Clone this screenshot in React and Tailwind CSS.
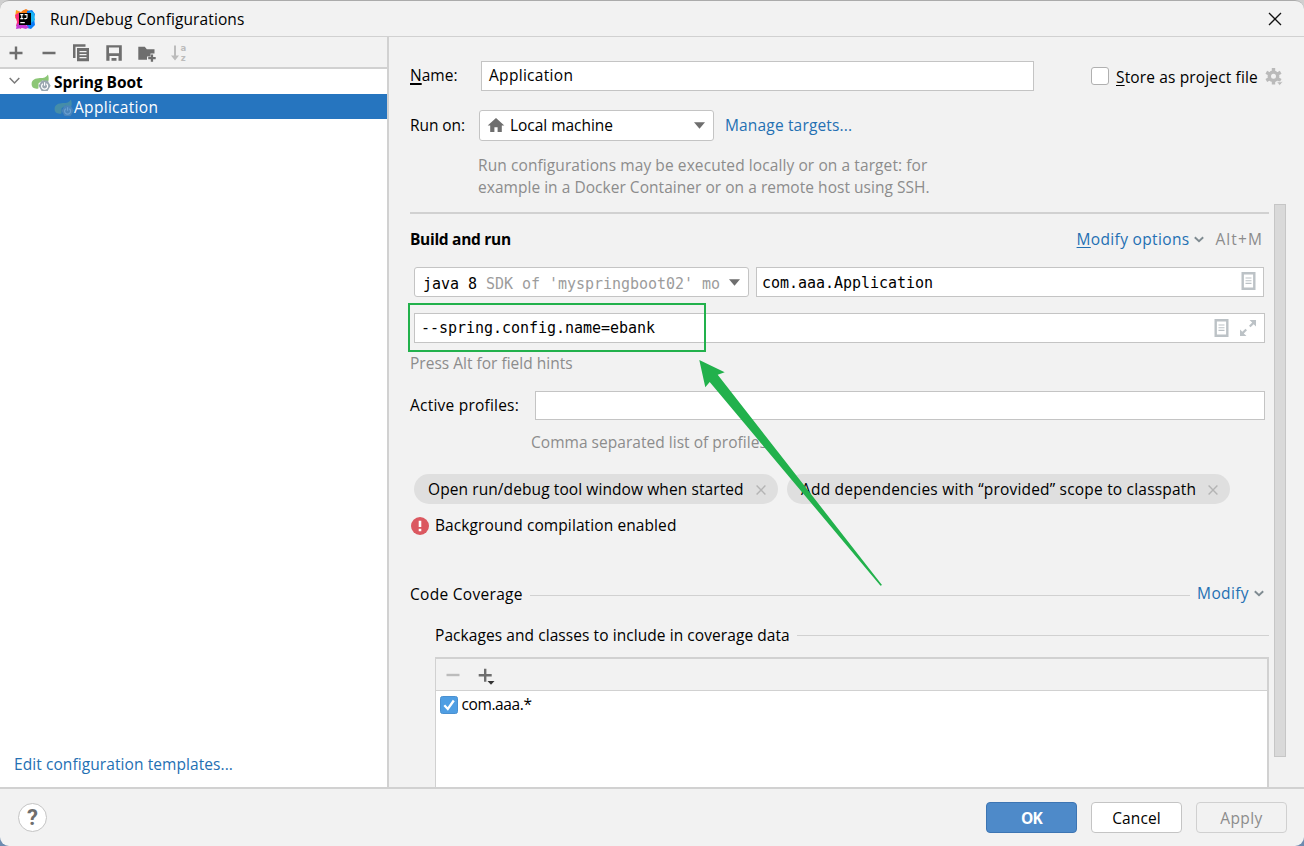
import React, { useState } from 'react';

// =============================================================================
// ICONS
// =============================================================================

const IdeaLogo = () => (
  <svg width="20" height="20" viewBox="0 0 20 20">
    <path d="M1 1l5 2 3-2 2 4-6 8-5-4z" fill="#fe9a1c" />
    <path d="M7 2l4-2 5 3-6 5H5z" fill="#f97a12" />
    <path d="M0 6l5-3 3 8-2 9-5-3 1-4z" fill="#fe2d7d" />
    <path d="M12 2l5-1 3 4-1 4 1 7-4 4-4-1z" fill="#0a7cf6" />
    <path d="M2 15l6-1 6 4-3 2-4-1-6 1z" fill="#c53bd6" />
    <path d="M15 2l4 2 1 7-4 3z" fill="#18b4f3" />
    <path d="M4 4h12v12H4z" />
    <path
      d="M5.3 5.6h3M6.8 5.6v4M5.3 9.6h3M9.600 5.6h2.400v2.8q0 1.2-1.2 1.2H9.300"
      fill="none"
      stroke="#fff"
      strokeWidth="1.1"
    />
    <path d="M5.3 13.1h4.5v1.1H5.3z" fill="#fff" />
  </svg>
);

const SpringIcon = ({ className }) => (
  <svg width="20" height="18" viewBox="0 0 20 18" className={className}>
    <path
      d="M17 .5c1 3.300 1 6.300-.3 8L11.500 6.500 7.600 9.200 7.400 14.500C3 15.300.6 13.300.6 10.300.6 5.500 4.500 4.300 9 4.100c3.600-.1 6.200-.6 8-3.600z"
      fill="#8cc676"
    />
    <path d="M10.600 6.600h6l3 5.200-3 5.200h-6l-3-5.200z" fill="#9aa7b0" />
    <path d="M11.900 9.700a3 3 0 1 0 3.400 0M13.600 8.300v3.400" fill="none" stroke="#fff" strokeWidth="1.200" />
  </svg>
);

const PlusIcon = () => (
  <svg width="20" height="20" viewBox="0 0 20 20" fill="#6e6e6e">
    <path d="M8.800 3.500h2.400v5.300h5.300v2.400h-5.300v5.300H8.800v-5.300H3.500V8.800h5.300z" />
  </svg>
);

const MinusIcon = ({ fill = '#6e6e6e' }) => (
  <svg width="20" height="20" viewBox="0 0 20 20" fill={fill}>
    <path d="M3.500 8.800h13v2.400h-13z" />
  </svg>
);

const CopyIcon = () => (
  <svg width="20" height="20" viewBox="0 0 20 20" fill="#6e6e6e">
    <path d="M2 1.300h12.500v2.500H4.500V15H2z" />
    <path fillRule="evenodd" d="M6 5h12v13.300H6zM8.500 8v1.300h7V8zM8.500 11v1.300h7V11zM8.500 14v1.300h7V14z" />
  </svg>
);

const SaveIcon = () => (
  <svg width="20" height="20" viewBox="0 0 20 20" fill="#6e6e6e">
    <path fillRule="evenodd" d="M2.300 2.300h15.500v15.500H2.300zM5 4.600v5.700h10V4.600zM5.500 13v4.800h2V15h5v2.800h2V13z" />
  </svg>
);

const NewFolderIcon = () => (
  <svg width="20" height="20" viewBox="0 0 20 20" fill="#6e6e6e">
    <path d="M1.300 3.700h6.500l2 2.600h7.700v4.200h-4v3H10v3.200H1.300z" />
    <path d="M13.800 11.500h2.300v2.400h2.600v2.300h-2.600v2.500h-2.300v-2.500h-2.600v-2.300h2.600z" />
  </svg>
);

const SortIcon = () => (
  <svg width="20" height="20" viewBox="0 0 20 20" fill="#bcbcbc">
    <path d="M5 2.500h2v10h3l-4 5-4-5h3z" />
    <text x="11.500" y="7.800" fontSize="8.500" fontWeight="700" fontFamily="DejaVu Sans, sans-serif">a</text>
    <text x="11.700" y="18" fontSize="8.500" fontWeight="700" fontFamily="DejaVu Sans, sans-serif">z</text>
  </svg>
);

const HomeIcon = () => (
  <svg width="18" height="16" viewBox="0 0 18 16" fill="#6e6e6e">
    <path d="M9 0L17.300 7.400h-2.500v6.700h-4.200V9.200H7.400v4.900H3.200V7.400H.7z" />
  </svg>
);

const ChevronIcon = ({ stroke = '#7f8b91' }) => (
  <svg width="10" height="8" viewBox="0 0 10 8" fill="none" stroke={stroke} strokeWidth="1.900">
    <path d="M.8 1.300L5 5.300l4.200-4" />
  </svg>
);

const TreeArrowIcon = () => (
  <svg width="12" height="8" viewBox="0 0 12 8" fill="none" stroke="#7a7a7a" strokeWidth="1.500">
    <path d="M.7 1L5.500 6l4.800-5" />
  </svg>
);

const TriangleIcon = () => (
  <svg width="11" height="7" viewBox="0 0 11 7" fill="#6e6e6e">
    <path d="M0 .3h11L5.500 6.800z" />
  </svg>
);

const GearIcon = () => (
  <svg width="19" height="19" viewBox="0 0 19 19">
    <circle cx="8.500" cy="8.300" r="4.200" fill="none" stroke="#bababa" strokeWidth="3.400" />
    <path
      d="M8.500 0v4M8.500 12.600v4M1.300 4.200l3.500 2M12.200 10.400l3.500 2M1.300 12.400l3.500-2M12.200 6.200l3.500-2"
      stroke="#bababa"
      strokeWidth="3.400"
    />
    <path d="M11.500 13.800h6.500l-3.300 3.800z" fill="#bababa" stroke="#f2f2f2" strokeWidth=".8" />
  </svg>
);

const MacroIcon = () => (
  <svg width="15" height="18" viewBox="0 0 15 18" fill="none" stroke="#bcc2c6">
    <path d="M1.700 1.300h11.600v15.400H1.700z" strokeWidth="2.400" />
    <path d="M4.500 6h6M4.500 8.700h6M4.500 11.400h6" strokeWidth="1.100" />
  </svg>
);

const ExpandIcon = () => (
  <svg width="16" height="16" viewBox="0 0 16 16" fill="#bcc2c6">
    <path d="M9.500 0H16v6.500L13.700 4.200 10.500 7.300 9 5.800l3.200-3.400z" />
    <path d="M6.500 16H0V9.500l2.300 2.300 3.200-3.100L7 10.200l-3.200 3.400z" />
  </svg>
);

const ChipCloseIcon = () => (
  <svg width="10" height="10" viewBox="0 0 10 10" stroke="#b4b4b4" strokeWidth="1.400">
    <path d="M.6.6l8.800 8.800M9.400.6L.6 9.400" />
  </svg>
);

const ErrorIcon = () => (
  <svg width="18" height="18" viewBox="0 0 18 18">
    <circle cx="9" cy="9" r="9" fill="#db5860" />
    <path d="M7.700 3.800h2.600v6.100H7.700zM7.700 11.700h2.600v2.500H7.700z" fill="#fff" />
  </svg>
);

const AddMenuIcon = () => (
  <svg width="20" height="20" viewBox="0 0 20 20">
    <path d="M8 2.800h2.400v5.300h5.300v2.400h-5.300v5.300H8v-5.300H2.700V8.100H8z" fill="#6e6e6e" />
    <path d="M11.500 15h7L15 18.700z" fill="#333" />
  </svg>
);

// =============================================================================
// COMPONENTS
// =============================================================================

const TitleBar = () => (
  <header className="flex h-[36px] shrink-0 items-center border-b border-[#d1d1d1] pl-[15px]">
    <IdeaLogo />
    <span className="ml-[15px] pt-[2px] tracking-[0.108px]">Run/Debug Configurations</span>
    <svg width="14" height="14" viewBox="0 0 14 14" stroke="#111" strokeWidth="1.300" className="mr-[22px] ml-auto">
      <path d="M1 1l12 12M13 1L1 13" />
    </svg>
  </header>
);

const Sidebar = () => (
  <aside className="flex w-[389px] shrink-0 flex-col border-r-2 border-[#d1d1d1] bg-white">
    <div className="flex h-[32px] items-center gap-[12.700px] border-b-2 border-[#d1d1d1] bg-[#f2f2f2] pt-px pl-[6px]">
      <PlusIcon />
      <MinusIcon />
      <CopyIcon />
      <SaveIcon />
      <NewFolderIcon />
      <SortIcon />
    </div>

    <div className="flex h-[25px] items-center pl-[9px]">
      <span className="mb-[2px]"><TreeArrowIcon /></span>
      <SpringIcon className="mt-[2px] ml-[10px]" />
      <span className="ml-[3px] pt-[2px] font-bold tracking-[-0.070px]">Spring Boot</span>
    </div>
    <div className="flex h-[25px] items-center bg-[#2675bf] pl-[54px] text-white">
      <SpringIcon className="mt-[2px] opacity-30" />
      <span className="pt-[3px] tracking-[0.300px]">Application</span>
    </div>

    <a className="mt-auto mb-[12px] ml-[14px] leading-[22px] tracking-[0.080px] text-[#2470b3]">
      Edit configuration templates...
    </a>
  </aside>
);

const RunTarget = ({ stored, onStoredChange }) => (
  <div className="h-[167px] pt-[24px]">
    <div className="flex h-[30px] items-center">
      <label className="w-[71px] tracking-[0.020px]">
        <span className="underline decoration-[1.500px] underline-offset-2">N</span>ame:
      </label>
      <div className="flex h-[30px] w-[553px] items-center border border-[#c4c4c4] bg-white pl-[7px] tracking-[0.300px]">
        Application
      </div>
      <button
        className="ml-[57px] h-[18px] w-[18px] rounded-[3px] border border-[#b0b0b0] bg-white"
        onClick={() => onStoredChange(!stored)}
      />
      <span className="ml-[7px] pt-[4px] tracking-[0.140px]">
        <span className="underline underline-offset-2">S</span>tore as project file
      </span>
      <span className="ml-[7px] pt-[2px]"><GearIcon /></span>
    </div>

    <div className="mt-[19px] flex h-[31px] items-center">
      <label className="w-[69px] tracking-[-0.080px]">Run on:</label>
      <div className="flex h-[31px] w-[235px] items-center rounded-[3px] border border-[#c4c4c4] bg-white pr-[8px] pl-[7px]">
        <HomeIcon />
        <span className="mr-auto ml-[5px] tracking-[-0.040px]">Local machine</span>
        <TriangleIcon />
      </div>
      <a className="ml-[11px] tracking-[0.160px] text-[#2470b3]">Manage targets...</a>
    </div>

    <div className="mt-[13px] ml-[68px] leading-[22px] whitespace-nowrap text-[#8c8c8c]">
      <div className="tracking-[0.090px]">Run configurations may be executed locally or on a target: for</div>
      <div className="tracking-[0.034px]">example in a Docker Container or on a remote host using SSH.</div>
    </div>
  </div>
);

const BuildAndRun = () => (
  <>
    <div className="mt-[10px] flex h-[30px] items-center">
      <span className="pt-[2px] font-bold tracking-[-0.300px]">Build and run</span>
      <a className="ml-auto pt-[2px] tracking-[0.340px] text-[#2470b3]">
        <span className="underline underline-offset-2">M</span>odify options
      </a>
      <span className="mt-[2px] ml-[5px]"><ChevronIcon /></span>
      <span className="mr-[6px] ml-[11px] pt-[2px] tracking-[1.100px] text-[#8c8c8c]">Alt+M</span>
    </div>

    <div className="mt-[13px] ml-[4px] flex h-[30px] font-['DejaVu_Sans_Mono',monospace] text-[15px] tracking-[-0.030px]">
      <div className="flex w-[335px] items-center rounded-[3px] border border-[#c4c4c4] bg-white pr-[8px] pl-[8px]">
        <span className="mr-auto pt-[4px] whitespace-pre">
          java 8 <span className="text-[#9c9c9c]">SDK of 'myspringboot02' mo</span>
        </span>
        <TriangleIcon />
      </div>
      <div className="ml-[7px] flex w-[508px] items-center justify-between border border-[#c4c4c4] bg-white pr-[7px] pl-[5px]">
        <span className="pt-[2px]">com.aaa.Application</span>
        <span className="mb-[2px]"><MacroIcon /></span>
      </div>
    </div>

    {/* Program arguments */}
    <div className="relative mt-[16px] ml-[4px] flex h-[30px] w-[851px] items-center border border-[#c4c4c4] bg-white pr-[8px] pl-[6px] font-['DejaVu_Sans_Mono',monospace] text-[15px] tracking-[-0.030px]">
      <span className="mr-auto">--spring.config.name=ebank</span>
      <MacroIcon />
      <span className="ml-[11px]"><ExpandIcon /></span>
      <div className="pointer-events-none absolute -top-[11px] -left-[7px] h-[49px] w-[298px] border-2 border-[#22b14c]" />
    </div>
    <div className="mt-[9px] leading-[22px] tracking-[0.010px] text-[#8c8c8c]">Press Alt for field hints</div>

    <div className="mt-[17px] flex h-[29px] items-center">
      <label className="w-[125px] tracking-[0.220px]">Active profiles:</label>
      <div className="h-[29px] w-[730px] border border-[#c4c4c4] bg-white" />
    </div>
    <div className="mt-[11px] ml-[121px] leading-[22px] tracking-[0.030px] text-[#8c8c8c]">
      Comma separated list of profiles
    </div>
  </>
);

const Chip = ({ children, className }) => (
  <div className={`flex h-[30px] items-center justify-between rounded-full bg-[#dfdfdf] pr-[12.500px] pl-[14px] whitespace-nowrap ${className}`}>
    <span className="pt-[2px]">{children}</span>
    <span className="pt-px"><ChipCloseIcon /></span>
  </div>
);

const CodeCoverage = () => (
  <>
    <div className="mt-[46px] flex h-[22px] items-center">
      <span className="pt-[2px] tracking-[0.300px]">Code Coverage</span>
      <div className="mt-[2px] ml-[7px] h-px flex-1 bg-[#d1d1d1]" />
      <a className="ml-[7px] tracking-[0.380px] text-[#2470b3]">Modify</a>
      <span className="mr-[5px] ml-[5px]"><ChevronIcon /></span>
    </div>
    <div className="mt-[19px] ml-[25px] flex h-[22px] items-center">
      <span className="pt-[2px] tracking-[0.070px]">Packages and classes to include in coverage data</span>
      <div className="ml-[7px] h-px flex-1 bg-[#d1d1d1]" />
    </div>

    <div className="mt-[11px] ml-[25px] flex flex-1 flex-col border-t-2 border-r-2 border-l border-[#d1d1d1] bg-white">
      <div className="flex h-[32px] items-center gap-[13px] border-b border-[#d1d1d1] bg-[#f2f2f2] pl-[7px]">
        <MinusIcon fill="#bcbcbc" />
        <span className="pt-[2px]"><AddMenuIcon /></span>
      </div>
      <div className="mt-[4px] flex h-[20px] items-center pl-[3.500px]">
        <svg width="18" height="18" viewBox="0 0 18 18">
          <rect x=".5" y=".5" width="17" height="17" rx="2" fill="#4f9ee3" stroke="#4a90d0" />
          <path d="M4.300 9.300l3.500 3.700 6-8.500" fill="none" stroke="#fff" strokeWidth="2.300" />
        </svg>
        <span className="ml-[4px] tracking-[-0.400px]">com.aaa.*</span>
      </div>
    </div>
  </>
);

const Footer = () => (
  <footer className="flex h-[59px] shrink-0 items-center border-t-2 border-[#d1d1d1] pr-[17px] pl-[18px]">
    <button className="mr-auto flex h-[29px] w-[29px] items-center justify-center rounded-full border border-[#c4c4c4] bg-white font-['Roboto',sans-serif] text-[22px] font-bold text-[#6e6e6e]">
      ?
    </button>
    <div className="flex gap-[14px]">
      <button className="h-[31px] w-[91px] rounded-[4px] border border-[#3d75b3] bg-[#4e8ac9] pt-[2px] font-bold tracking-[-0.800px] text-white">
        OK
      </button>
      <button className="h-[31px] w-[91px] rounded-[4px] border border-[#c4c4c4] bg-white pt-[2px] tracking-[0.100px]">
        Cancel
      </button>
      <button className="h-[31px] w-[91px] rounded-[4px] border border-[#d0d0d0] pt-[2px] tracking-[0.400px] text-[#8c8c8c]">
        Apply
      </button>
    </div>
  </footer>
);

// Annotation arrow pointing at the program arguments field
const Arrow = () => (
  <svg width="184" height="227" viewBox="699 360 184 227" className="pointer-events-none absolute top-[359px] left-[699px]">
    <path d="M699.300 360l25.400 12.300-7 2.400L882 585l-1.500.800L709.700 382l-4.400 5.300z" fill="#22b14c" />
  </svg>
);

// =============================================================================
// MAIN APP COMPONENT
// =============================================================================

function App() {
  const [stored, setStored] = useState(false);

  return (
    <div className="h-[846px] w-[1304px] overflow-hidden bg-linear-to-b from-[#d0d0d0] to-[#6d8bb0]">
      <div className="relative flex h-[846px] w-[1304px] flex-col overflow-hidden rounded-[9px] border-t border-[#ababab] bg-[#f2f2f2] font-['Open_Sans',sans-serif] text-[15.500px] text-black">
        <TitleBar />

        <div className="flex min-h-0 flex-1">
          <Sidebar />

          <main className="flex min-w-0 flex-1 flex-col pl-[21px]">
            <RunTarget stored={stored} onStoredChange={setStored} />

            <div className="flex min-h-0 flex-1">
              <div className="flex w-[859px] flex-col pt-[8px]">
                <div className="h-[2px] shrink-0 bg-[#d1d1d1]" />
                <BuildAndRun />

                <div className="mt-[21px] ml-[4px] flex gap-[9px]">
                  <Chip className="w-[364px] tracking-[0.090px]">Open run/debug tool window when started</Chip>
                  <Chip className="w-[443px] tracking-[0.197px]">Add dependencies with “provided” scope to classpath</Chip>
                </div>
                <div className="mt-[10px] ml-[1px] flex h-[23px] items-center">
                  <ErrorIcon />
                  <span className="ml-[6px] pt-px tracking-[0.100px]">Background compilation enabled</span>
                </div>

                <CodeCoverage />
              </div>

              {/* Scrollbar */}
              <div className="ml-[5px] h-[553px] w-[12px] border border-[#c6c6c6] bg-[#d9d9d9]" />
            </div>
          </main>
        </div>

        <Footer />
        <Arrow />
      </div>
    </div>
  );
}

export default App;
